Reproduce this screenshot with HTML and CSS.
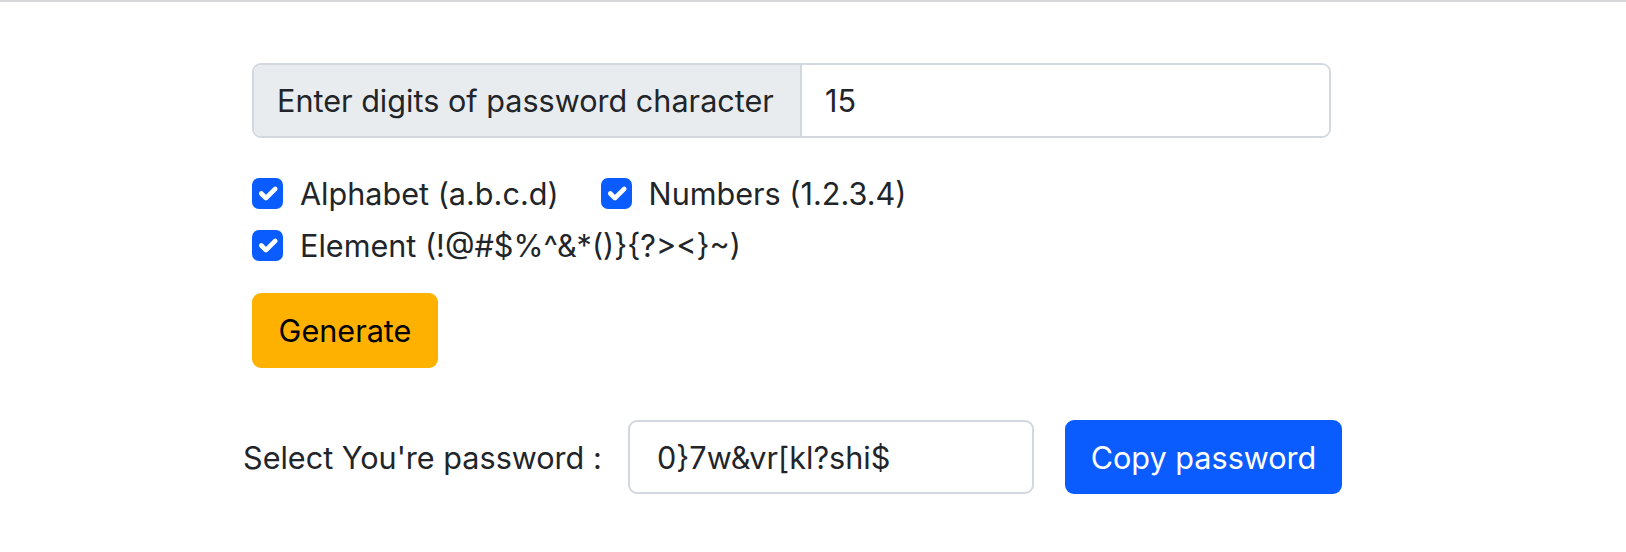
FILE: index.html
```html
<!DOCTYPE html>
<html lang="en">
<head>
<meta charset="utf-8">
<title>Password Generator</title>
<link rel="stylesheet" href="styles.css">
</head>
<body>
<main class="page">
  <div class="input-group">
    <span class="addon">Enter digits of password character</span>
    <input class="field" type="text" value="15">
  </div>

  <div class="checks">
    <div class="check-row">
      <label class="check">
        <span class="box"><svg viewBox="0 0 20 20" width="31" height="31"><path d="M6 10l3 3 6-6" fill="none" stroke="#fff" stroke-width="3" stroke-linecap="round" stroke-linejoin="round"/></svg></span>
        <span class="check-label">Alphabet (a.b.c.d)</span>
      </label>
      <label class="check">
        <span class="box"><svg viewBox="0 0 20 20" width="31" height="31"><path d="M6 10l3 3 6-6" fill="none" stroke="#fff" stroke-width="3" stroke-linecap="round" stroke-linejoin="round"/></svg></span>
        <span class="check-label">Numbers (1.2.3.4)</span>
      </label>
    </div>
    <div class="check-row">
      <label class="check">
        <span class="box"><svg viewBox="0 0 20 20" width="31" height="31"><path d="M6 10l3 3 6-6" fill="none" stroke="#fff" stroke-width="3" stroke-linecap="round" stroke-linejoin="round"/></svg></span>
        <span class="check-label">Element (!@#$%^&amp;*()}{?&gt;&lt;}~)</span>
      </label>
    </div>
  </div>

  <button class="btn btn-generate" type="button">Generate</button>

  <div class="result-row">
    <span class="result-label">Select You're password :</span>
    <input class="result-field" type="text" value="0}7w&amp;vr[kl?shi$">
    <button class="btn btn-copy" type="button">Copy password</button>
  </div>
</main>
</body>
</html>
```

FILE: styles.css
```css
* { box-sizing: border-box; }

html, body { margin: 0; padding: 0; background: #fff; }

body {
  border-top: 2px solid #d5d7d9;
  font-family: Inter, "Noto Sans", "Liberation Sans", sans-serif;
  font-size: 30.6px;
  color: #212529;
}

.page {
  padding: 61px 0 0 252px;
  width: 1400px;
}

.input-group {
  display: flex;
  width: 1079px;
  height: 75px;
  border: 2px solid #d3d8de;
  border-radius: 9px;
  overflow: hidden;
}

.addon {
  display: flex;
  align-items: center;
  width: 548px;
  padding-left: 23px;
  background: #e9ecef;
  border-right: 2px solid #d3d8de;
}

.field {
  flex: 1;
  border: 0;
  outline: none;
  padding: 0 0 0 23px;
  font: inherit;
  color: #212529;
  background: #fff;
}

.checks {
  margin-top: 29px;
  display: flex;
  flex-direction: column;
}

.check-row {
  display: flex;
  height: 52px;
  align-items: center;
  gap: 42px;
}

.check {
  display: flex;
  align-items: center;
  gap: 17px;
}

.box {
  display: flex;
  width: 31px;
  height: 31px;
  border-radius: 7px;
  background: #0b5cff;
}

.btn {
  font: inherit;
  border: 0;
  border-radius: 9px;
  height: 75px;
  padding: 0 24px;
  cursor: pointer;
}

.btn-generate {
  margin-top: 22px;
  width: 186px;
  background: #ffb100;
  color: #000;
}

.result-row {
  display: flex;
  align-items: center;
  margin-top: 52px;
  margin-left: -9px;
}

.result-label {
  width: 385px;
}

.result-field {
  width: 406px;
  height: 74px;
  border: 2px solid #d3d8de;
  border-radius: 9px;
  padding: 0 0 0 27px;
  font: inherit;
  color: #212529;
  outline: none;
}

.btn-copy {
  margin-left: 31px;
  width: 277px;
  height: 74px;
  background: #0b5cff;
  color: #fff;
}
```
